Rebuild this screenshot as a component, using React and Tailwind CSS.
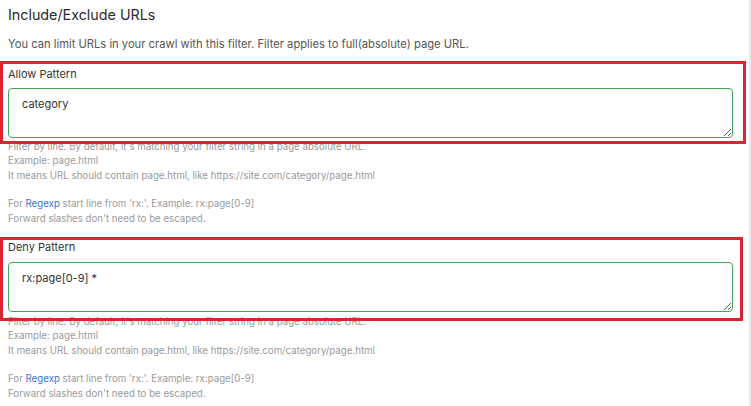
import React from "react";

function Help({ className }) {
  return (
    <div className={"text-[9.7px] leading-[14.4px] text-[#9a9a9a] " + className}>
      <div>Filter by line. By default, it's matching your filter string in a page absolute URL.</div>
      <div>Example: page.html</div>
      <div>It means URL should contain page.html, like https://site.com/category/page.html</div>
      <div className="h-[14px]" />
      <div>
        For <span className="text-[#3b73d6]">Regexp</span> start line from 'rx:'. Example: rx:page[0-9]
      </div>
      <div>Forward slashes don't need to be escaped.</div>
    </div>
  );
}

function Field({ label, value, overlay, labelGap, helpGap }) {
  return (
    <div>
      <div className="relative">
        <div className={"text-[11px] leading-[16px] text-[#333] " + labelGap}>{label}</div>
        <textarea
          readOnly
          value={value}
          className="block w-full h-[50px] rounded-[4px] border border-[#43a356] bg-white pl-[13px] pt-[7px] text-[11px] leading-[16px] text-[#333] outline-none resize-y"
          style={{ fontFamily: "Inter, 'Noto Sans', sans-serif" }}
        />
        <div className={"pointer-events-none absolute border-[3px] border-[#dc2430] " + overlay} />
      </div>
      <Help className={helpGap} />
    </div>
  );
}

export default function App() {
  return (
    <div
      className="w-[751px] h-[406px] overflow-hidden bg-white border-r-2 border-[#ececec]"
      style={{ fontFamily: "Inter, 'Noto Sans', sans-serif" }}
    >
      <div className="pl-[8px] pr-[16px]">
        <div className="pt-[5px] text-[14.3px] leading-[20px] text-[#2b2b2b]">Include/Exclude URLs</div>
        <div className="mt-[11px] text-[11.2px] leading-[16px] text-[#555]">
          You can limit URLs in your crawl with this filter. Filter applies to full(absolute) page URL.
        </div>
        <div className="mt-[14px]">
          <Field
            label="Allow Pattern"
            value="category"
            labelGap="mb-[6px]"
            helpGap="mt-[2px]"
            overlay="left-[-8px] right-[-13px] top-[-5px] bottom-[-6px]"
          />
        </div>
        <div className="mt-[13px]">
          <Field
            label="Deny Pattern"
            value="rx:page[0-9] *"
            labelGap="mb-[7px]"
            helpGap="mt-[3px]"
            overlay="left-[-8px] right-[-10px] top-[-2px] bottom-[-9px]"
          />
        </div>
      </div>
    </div>
  );
}
